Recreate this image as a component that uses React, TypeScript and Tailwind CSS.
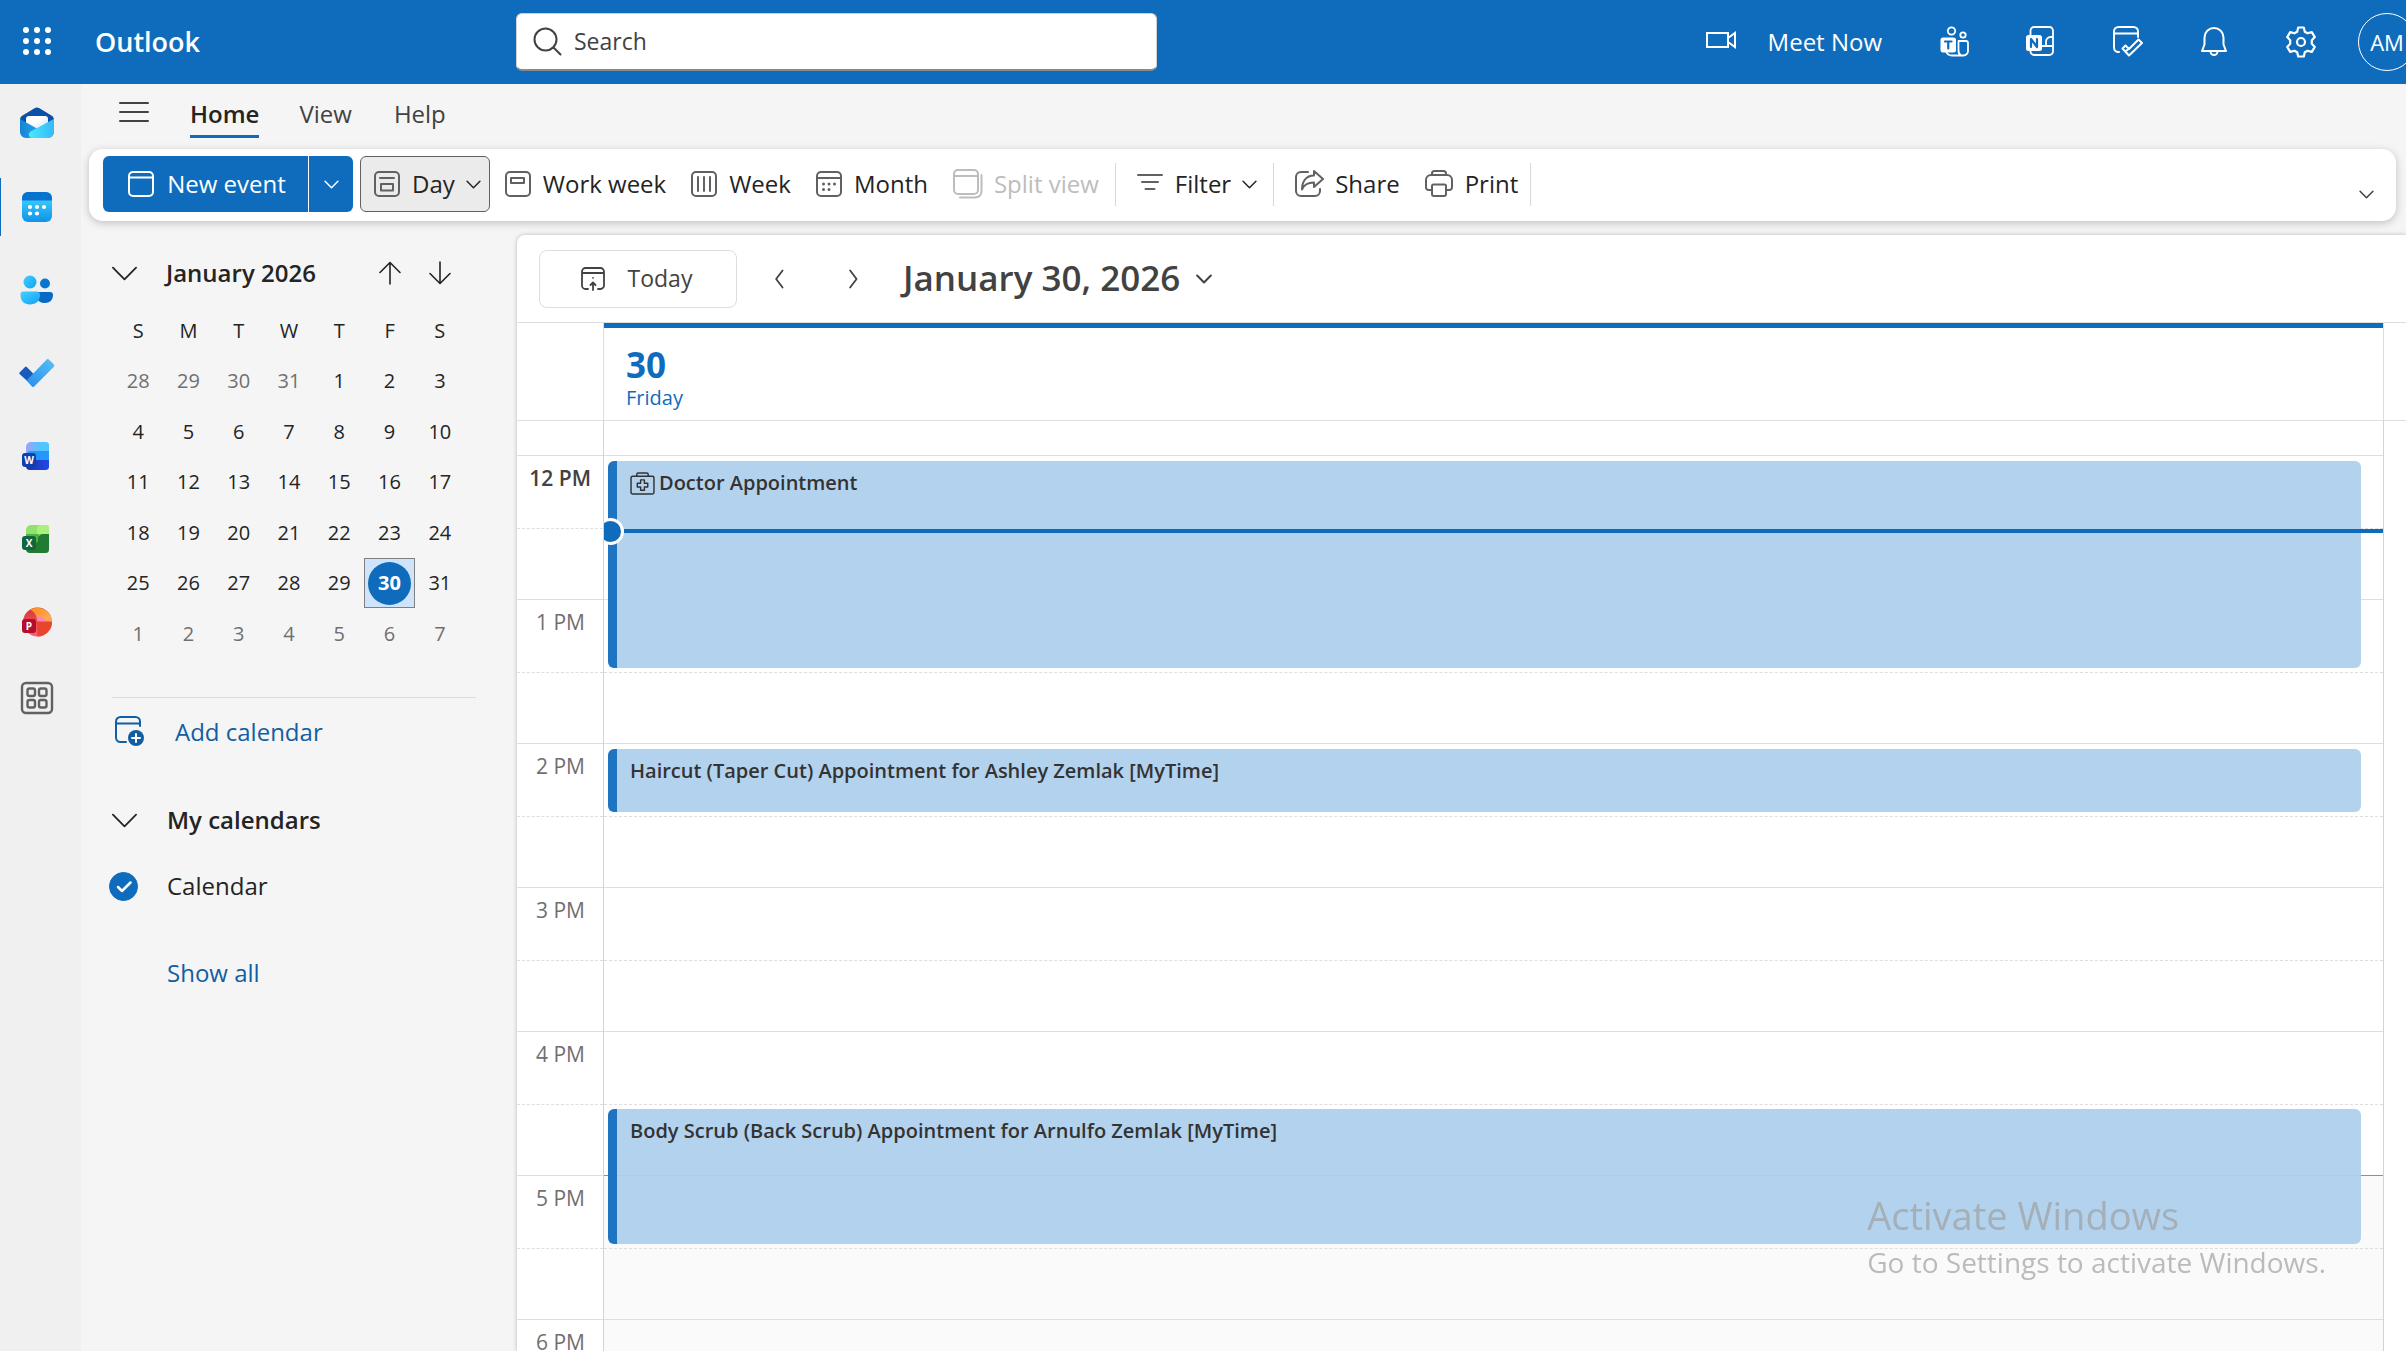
import type { ReactNode } from "react";
import clsx from "clsx";

const HOUR = 144;

const weekDays = ["S", "M", "T", "W", "T", "F", "S"];

const weeks = [
    [28, 29, 30, 31, 1, 2, 3],
    [4, 5, 6, 7, 8, 9, 10],
    [11, 12, 13, 14, 15, 16, 17],
    [18, 19, 20, 21, 22, 23, 24],
    [25, 26, 27, 28, 29, 30, 31],
    [1, 2, 3, 4, 5, 6, 7],
];

const hours = ["12 PM", "1 PM", "2 PM", "3 PM", "4 PM", "5 PM", "6 PM"];

const events = [
    { title: "Doctor Appointment", start: 0, length: 1.5, health: true },
    { title: "Haircut (Taper Cut) Appointment for Ashley Zemlak [MyTime]", start: 2, length: 0.5 },
    { title: "Body Scrub (Back Scrub) Appointment for Arnulfo Zemlak [MyTime]", start: 4.5, length: 1 },
];

type IconProps = { children: ReactNode; className?: string; size?: number; box?: number; width?: number };

/* Line icon, drawn on a 28 unit square */
function Icon({ children, className, size = 28, box = 28, width = 2 }: IconProps) {
    return (
        <svg
            width={size}
            height={size}
            viewBox={`0 0 ${box} ${box}`}
            fill="none"
            stroke="currentColor"
            strokeWidth={width}
            strokeLinecap="round"
            strokeLinejoin="round"
            className={clsx("shrink-0", className)}
            aria-hidden="true"
        >
            {children}
        </svg>
    );
}

function Chevron({ size = 14, dir = "down", width = 1.5 }: { size?: number; dir?: "down" | "left" | "right"; width?: number }) {
    const paths = {
        down: "M1 4l6 6 6-6",
        left: "M9.5 1L5 7l4.500 6",
        right: "M5 1l4.500 6L5 13",
    };
    return (
        <Icon size={size} box={14} width={(width * 14) / size}>
            <path d={paths[dir]} />
        </Icon>
    );
}

function MailLogo() {
    return (
        <svg width="34" height="34" viewBox="0 0 34 34" aria-hidden="true">
            <defs>
                <linearGradient id="mailBody" x1="0" y1="0" x2="1" y2="0">
                    <stop offset="0" stopColor="#1583d8" />
                    <stop offset="1" stopColor="#34c3f5" />
                </linearGradient>
                <linearGradient id="mailFlap" x1="0" y1="0" x2="1" y2="0">
                    <stop offset="0" stopColor="#4be8ff" />
                    <stop offset="1" stopColor="#35b9f6" />
                </linearGradient>
                <linearGradient id="mailPaper" x1="0" y1="0" x2="1" y2="1">
                    <stop offset=".4" stopColor="#fff" />
                    <stop offset="1" stopColor="#c4dcf2" />
                </linearGradient>
            </defs>
            <path d="M0 13C0 11 1 9.500 2.600 8.600L14.500 1.200a5 5 0 0 1 5 0L31.400 8.600C33 9.500 34 11 34 13v6H0z" fill="#0a50a8" />
            <path d="M6 12a3 3 0 0 1 3-3h16a3 3 0 0 1 3 3v9l-11 4-11-4z" fill="url(#mailPaper)" />
            <path d="M0 12l17 9.500L34 12v13a6 6 0 0 1-6 6H6a6 6 0 0 1-6-6z" fill="url(#mailBody)" />
            <path d="M34 12v13a6 6 0 0 1-6 6H12c-4 0-4.500-6 0-7.200z" fill="url(#mailFlap)" />
        </svg>
    );
}

function CalendarLogo() {
    return (
        <svg width="30" height="30" viewBox="0 0 30 30" aria-hidden="true">
            <defs>
                <linearGradient id="calBody" x1="0" y1="0" x2="0" y2="1">
                    <stop offset=".2" stopColor="#3dcbff" />
                    <stop offset="1" stopColor="#0f93e8" />
                </linearGradient>
            </defs>
            <rect width="30" height="30" rx="6" fill="url(#calBody)" />
            <path d="M0 8V6a6 6 0 0 1 6-6h18a6 6 0 0 1 6 6v2.500H0z" fill="#0674cf" />
            <g fill="#fff">
                <circle cx="8" cy="15" r="2.100" />
                <circle cx="15" cy="15" r="2.100" />
                <circle cx="22" cy="15" r="2.100" />
                <circle cx="8" cy="21.500" r="2.100" />
                <circle cx="15" cy="21.500" r="2.100" />
            </g>
        </svg>
    );
}

function PeopleLogo() {
    return (
        <svg width="34" height="30" viewBox="0 0 34 30" aria-hidden="true">
            <defs>
                <linearGradient id="peopleFront" x1="0" y1="0" x2="1" y2="1">
                    <stop offset="0" stopColor="#45d0ff" />
                    <stop offset="1" stopColor="#0fa2f5" />
                </linearGradient>
            </defs>
            <circle cx="25" cy="8.500" r="5" fill="#0b76d1" />
            <path d="M17 17h13a3 3 0 0 1 3 3c0 5-3.500 8-8 8-4 0-8-2-8-6z" fill="#0669c4" />
            <circle cx="10" cy="7" r="6.500" fill="url(#peopleFront)" />
            <path d="M3.500 16.500h13a3.500 3.500 0 0 1 3.500 3.500c0 6-4 9.500-10 9.500S.5 26 .5 20a3.200 3.200 0 0 1 3-3.500z" fill="url(#peopleFront)" />
        </svg>
    );
}

function TodoLogo() {
    return (
        <svg width="36" height="30" viewBox="0 0 36 30" aria-hidden="true">
            <defs>
                <linearGradient id="todoTick" x1="0" y1="1" x2="1" y2="0">
                    <stop offset="0" stopColor="#2a8dea" />
                    <stop offset="1" stopColor="#57c0f8" />
                </linearGradient>
            </defs>
            <path d="M.8 14.200l5-5a1.500 1.500 0 0 1 2.200 0l7 7-6.500 7L.8 16.200a1.400 1.400 0 0 1 0-2z" fill="#195abd" />
            <path d="M7.500 22.500L27.700 1.600a1.500 1.500 0 0 1 2.200 0l5 5a1.500 1.500 0 0 1 0 2.100L15.200 28.500a1.500 1.500 0 0 1-2.200 0z" fill="url(#todoTick)" />
        </svg>
    );
}

/* Letter tile shared by the office apps */
function LetterTile({ letter, color, y = 11 }: { letter: string; color: string; y?: number }) {
    return (
        <>
            <rect x="0" y={y} width="14" height="14" rx="3" fill={color} />
            <text x="7" y={y + 10.500} textAnchor="middle" fill="#fff" fontSize="10" fontWeight="700" fontFamily="Open Sans, sans-serif">
                {letter}
            </text>
        </>
    );
}

function WordLogo() {
    return (
        <svg width="30" height="28" viewBox="0 0 30 28" aria-hidden="true">
            <defs>
                <linearGradient id="wordTop" x1="0" y1="0" x2="1" y2="0">
                    <stop offset="0" stopColor="#a3a2fb" />
                    <stop offset=".6" stopColor="#4fc6fd" />
                </linearGradient>
                <linearGradient id="wordLow" x1="0" y1="0" x2="1" y2="0">
                    <stop offset="0" stopColor="#2330a8" />
                    <stop offset="1" stopColor="#1c49e8" />
                </linearGradient>
            </defs>
            <path d="M4 5a5 5 0 0 1 5-5h15a3 3 0 0 1 3 3v8H4z" fill="url(#wordTop)" />
            <path d="M4 14a5 5 0 0 1 5-5h18v11H4z" fill="#2497f8" />
            <path d="M4 23a5 5 0 0 1 5-5h18v6.500a3.500 3.500 0 0 1-3.500 3.500H8a4 4 0 0 1-4-4z" fill="url(#wordLow)" />
            <LetterTile letter="W" color="#0f3fae" />
        </svg>
    );
}

function ExcelLogo() {
    return (
        <svg width="30" height="28" viewBox="0 0 30 28" aria-hidden="true">
            <path d="M4 5a5 5 0 0 1 5-5h15a3 3 0 0 1 3 3v8H4z" fill="#8fe36b" />
            <path d="M15 9V3.500A3.500 3.500 0 0 1 18.500 0H24a3 3 0 0 1 3 3v6z" fill="#a9f07f" />
            <path d="M4 9h13v10H4z" fill="#4db53f" />
            <path d="M16 14a5 5 0 0 1 5-5h6v15.500a3.500 3.500 0 0 1-3.500 3.500H8a4 4 0 0 1-4-4v-6h9a3 3 0 0 0 3-3z" fill="#237a32" />
            <LetterTile letter="X" color="#0f6640" />
        </svg>
    );
}

function PowerPointLogo() {
    return (
        <svg width="30" height="30" viewBox="0 0 30 30" aria-hidden="true">
            <defs>
                <linearGradient id="pptLeft" x1="0" y1="0" x2="0" y2="1">
                    <stop offset="0" stopColor="#d8362f" />
                    <stop offset="1" stopColor="#f9607b" />
                </linearGradient>
                <linearGradient id="pptRight" x1="0" y1="0" x2="1" y2="1">
                    <stop offset="0" stopColor="#ff8a1f" />
                    <stop offset="1" stopColor="#fdb465" />
                </linearGradient>
            </defs>
            <circle cx="15.500" cy="15" r="14.500" fill="url(#pptLeft)" />
            <path d="M8 2.500C17-2 30 3 30 15l-3 2-12-3c0-5-2-9-7-11.500z" fill="url(#pptRight)" />
            <path d="M15 8l3 1 8 6-11-.5z" fill="#fb84b4" />
            <path d="M15 14.500h15c0 8-6 15-14.500 15z" fill="#e8452e" />
            <LetterTile letter="P" color="#b50e2a" y={12} />
        </svg>
    );
}

function AppsIcon() {
    return (
        <Icon size={34} box={34} width={2.4}>
            <rect x="2" y="2" width="30" height="30" rx="4" />
            <rect x="7.500" y="7.500" width="7.500" height="7.500" rx="2" />
            <rect x="19" y="7.500" width="7.500" height="7.500" rx="2" />
            <rect x="7.500" y="19" width="7.500" height="7.500" rx="2" />
            <rect x="19" y="19" width="7.500" height="7.500" rx="2" />
        </Icon>
    );
}

const railApps = [
    { name: "Mail", logo: <MailLogo /> },
    { name: "Calendar", logo: <CalendarLogo />, active: true },
    { name: "People", logo: <PeopleLogo /> },
    { name: "To Do", logo: <TodoLogo /> },
    { name: "Word", logo: <WordLogo /> },
    { name: "Excel", logo: <ExcelLogo /> },
    { name: "PowerPoint", logo: <PowerPointLogo /> },
];

function TopBar() {
    return (
        <header className="flex h-21 shrink-0 items-center overflow-hidden bg-[#0f6cbd] text-white">
            <button aria-label="App launcher" className="flex w-[74px] shrink-0 justify-center">
                <svg width="30" height="30" viewBox="0 0 30 30" fill="currentColor" aria-hidden="true">
                    {[4, 15, 26].map((y) => [4, 15, 26].map((x) => <circle key={`${x}-${y}`} cx={x} cy={y - 1} r="3" />))}
                </svg>
            </button>
            <span className="w-[442px] shrink-0 pl-[21px] text-[27px] font-semibold">Outlook</span>
            <label className="flex h-[58px] w-[641px] items-center gap-3 rounded-md border border-b-2 border-[#d1d1d1] border-b-[#8a8a8a] bg-white px-4 text-[#424242]">
                <Icon size={29} box={29}>
                    <circle cx="12.500" cy="12.500" r="11" />
                    <path d="M20.500 20.500l7 7" />
                </Icon>
                <input type="text" placeholder="Search" aria-label="Search" className="min-w-0 flex-1 bg-transparent text-[23px] outline-none placeholder:text-[#424242]" />
            </label>
            <div className="ml-auto flex shrink-0 items-center">
                <button className="mr-[56px] flex items-center gap-[31px] text-[24px]">
                    <Icon size={32} box={32} width={2} className="-mt-1">
                        <path d="M2 9h21v14H2zM23 14l7-5v14l-7-5" strokeLinejoin="miter" />
                    </Icon>
                    Meet Now
                </button>
                <div className="mr-[40px] flex items-center gap-[54px]">
                    <button aria-label="Teams">
                        <Icon size={32} box={32} width={1.8}>
                            <circle cx="13.500" cy="5" r="3.700" />
                            <circle cx="25" cy="9" r="2.700" />
                            <path d="M20.500 15h7.500a2 2 0 0 1 2 2v8a4.500 4.500 0 0 1-4.500 4.500H14a6.500 6.500 0 0 1-6-4M20.500 15v9.500c0 2.500 1 4.300 3 5" />
                            <rect x="2.500" y="11.500" width="15.500" height="15" rx="2.500" fill="#fff" stroke="none" />
                            <path d="M7 15.500h6.500M10.250 15.500v7" stroke="#0f6cbd" strokeWidth="2.200" />
                        </Icon>
                    </button>
                    <button aria-label="OneNote">
                        <Icon size={32} box={32} width={1.8}>
                            <path d="M6.500 10V4.500A3.500 3.500 0 0 1 10 1h15.500A3.500 3.500 0 0 1 29 4.500v21a3.500 3.500 0 0 1-3.500 3.500H10a3.500 3.500 0 0 1-3.500-3.500M29 11h-2.500a4.500 4.500 0 0 0-4.500 4.500v4.500M18 20h11" />
                            <rect x="2" y="9" width="16" height="16" rx="2.500" fill="#fff" stroke="none" />
                            <path d="M7 21v-8l6 8v-8" stroke="#0f6cbd" strokeWidth="2.200" />
                        </Icon>
                    </button>
                    <button aria-label="My Day">
                        <Icon size={34} box={34}>
                            <path d="M9 27H8.500A4.500 4.500 0 0 1 4 22.500v-16A4.500 4.500 0 0 1 8.500 2h15A4.500 4.500 0 0 1 28 6.500V12M4 8.500h24" />
                            <path d="M12.500 23.500l3-3 3.500 3.500 9.500-9.500 3.500 3.500-13 12.500zM15.500 26.500l3.500-3" />
                        </Icon>
                    </button>
                    <button aria-label="Notifications">
                        <Icon size={32} box={32}>
                            <path d="M16 2a9.500 9.500 0 0 0-9.500 9.500v7L4 25h24l-2.500-6.500v-7A9.500 9.500 0 0 0 16 2zM12.500 25.500a3.500 3.500 0 0 0 7 0" />
                        </Icon>
                    </button>
                    <button aria-label="Settings">
                        <Icon size={34} box={34} width={2.2}>
                            <circle cx="17" cy="17" r="4" />
                            <path d="M14.200 2.500h5.600l1 4.200 2.800 1.600 4.200-1.200 3 5-3 3.100v3.600l3 3.100-3 5-4.200-1.200-2.800 1.600-1 4.200h-5.600l-1-4.200-2.800-1.600-4.200 1.200-3-5 3-3.100v-3.600l-3-3.100 3-5 4.200 1.200 2.800-1.600z" />
                        </Icon>
                    </button>
                </div>
                <button aria-label="Account" className="-mr-[10px] flex size-[58px] items-center justify-center rounded-full border border-white text-[22px]">
                    AM
                </button>
            </div>
        </header>
    );
}

function Rail() {
    return (
        <nav className="flex w-[81px] shrink-0 flex-col gap-[25px] bg-[#f0f0f0] pt-[11px]">
            {railApps.map((app) => (
                <button
                    key={app.name}
                    aria-label={app.name}
                    className={clsx("flex h-[58px] w-18 items-center justify-center border-l", app.active ? "border-[#0f6cbd]" : "border-transparent")}
                >
                    {app.logo}
                </button>
            ))}
            <button aria-label="More apps" className="flex h-11 w-[74px] items-center justify-center text-[#616161]">
                <AppsIcon />
            </button>
        </nav>
    );
}

function RibbonButton({ icon, label, menu, disabled, active }: { icon: ReactNode; label: string; menu?: boolean; disabled?: boolean; active?: boolean }) {
    return (
        <button
            disabled={disabled}
            className={clsx(
                "flex h-14 items-center gap-[11px] rounded-md border",
                active ? "mr-0.5 border-[#616161] bg-[#ebebeb] pr-2 pl-3" : "border-transparent px-[11px]",
                disabled ? "text-[#bdbdbd]" : "text-[#242424]",
            )}
        >
            <span className={disabled ? "text-[#bdbdbd]" : "text-[#616161]"}>{icon}</span>
            {label}
            {menu && <Chevron size={15} />}
        </button>
    );
}

function RibbonDivider() {
    return <span className="h-[43px] w-px bg-[#d8d8d8]" />;
}

function Ribbon() {
    return (
        <div className="mr-[10px] ml-2 flex h-[72px] shrink-0 items-center rounded-[14px] bg-white px-[14px] pb-0.5 text-[24px] shadow-[0_2px_8px_rgba(0,0,0,0.22)]">
            <div className="mr-[7px] flex h-14 overflow-hidden rounded-md bg-[#0f6cbd] text-white">
                <button className="flex w-[206px] items-center justify-center gap-3 border-r border-white pl-0.5">
                    <Icon>
                        <rect x="2" y="2" width="24" height="24" rx="4" />
                        <path d="M2 7.500h24" />
                    </Icon>
                    New event
                </button>
                <button aria-label="More new items" className="flex w-11 items-center justify-center">
                    <Chevron size={15} />
                </button>
            </div>
            <RibbonButton
                active
                menu
                label="Day"
                icon={
                    <Icon>
                        <rect x="2" y="2" width="24" height="24" rx="4" />
                        <path d="M7 8h14M8 14h12v6.500H8z" />
                    </Icon>
                }
            />
            <RibbonButton
                label="Work week"
                icon={
                    <Icon>
                        <rect x="2" y="2" width="24" height="24" rx="4" />
                        <path d="M7 8h13v5H7z" />
                    </Icon>
                }
            />
            <RibbonButton
                label="Week"
                icon={
                    <Icon>
                        <rect x="2" y="2" width="24" height="24" rx="4" />
                        <path d="M8 7v14M14 7v14M20 7v14" />
                    </Icon>
                }
            />
            <RibbonButton
                label="Month"
                icon={
                    <Icon>
                        <rect x="2" y="2" width="24" height="24" rx="4" />
                        <path d="M2 8h24" />
                        <path d="M8.500 14h.01M14 14h.01M19.500 14h.01M8.500 19.500h.01M14 19.500h.01" strokeWidth="3" />
                    </Icon>
                }
            />
            <RibbonButton
                disabled
                label="Split view"
                icon={
                    <Icon size={31} box={31}>
                        <rect x="2" y="1" width="24" height="24" rx="4" />
                        <path d="M2 7h24M29.500 6v16.500a6 6 0 0 1-6 6H8" />
                    </Icon>
                }
            />
            <span className="w-1" />
            <RibbonDivider />
            <span className="w-2" />
            <RibbonButton
                menu
                label="Filter"
                icon={
                    <Icon>
                        <path d="M2 5h24M6 12h16M9.500 19h9" />
                    </Icon>
                }
            />
            <span className="w-1" />
            <RibbonDivider />
            <span className="w-2" />
            <RibbonButton
                label="Share"
                icon={
                    <Icon size={30} box={30}>
                        <path d="M14 3H7a5 5 0 0 0-5 5v14a5 5 0 0 0 5 5h14a5 5 0 0 0 5-5v-2" />
                        <path d="M20 2l9 8-9 8v-4.500c-6 0-10 2-12 7 0-8 4-14 12-14z" />
                    </Icon>
                }
            />
            <RibbonButton
                label="Print"
                icon={
                    <Icon size={30} box={30}>
                        <path d="M8 21H4.500A2.500 2.500 0 0 1 2 18.500V11a5 5 0 0 1 5-5h16a5 5 0 0 1 5 5v7.500a2.500 2.500 0 0 1-2.500 2.500H22" />
                        <path d="M8 6V4.500A2.500 2.500 0 0 1 10.500 2h9A2.500 2.500 0 0 1 22 4.500V6M9.500 15.500h11A1.500 1.500 0 0 1 22 17v8a2 2 0 0 1-2 2H10a2 2 0 0 1-2-2v-8a1.500 1.500 0 0 1 1.500-1.500z" />
                    </Icon>
                }
            />
            <RibbonDivider />
            <button aria-label="Ribbon options" className="mt-5 mr-2 ml-auto text-[#424242]">
                <Chevron size={15} />
            </button>
        </div>
    );
}

function MiniCalendar() {
    return (
        <table className="mt-2 ml-8 h-[353px] w-[352px] table-fixed border-collapse text-center text-[20px] text-[#242424]">
            <thead>
                <tr>
                    {weekDays.map((day, i) => (
                        <th key={i} className="h-[50px] p-0 font-normal">
                            {day}
                        </th>
                    ))}
                </tr>
            </thead>
            <tbody>
                {weeks.map((week, row) => (
                    <tr key={row}>
                        {week.map((day, i) => {
                            const outside = (row === 0 && day > 7) || row === 5;
                            const today = row === 4 && day === 30;
                            return (
                                <td key={i} className={clsx("h-[50px] p-0", outside && "text-[#707070]")}>
                                    {today ? (
                                        <span className="flex h-[50px] items-center justify-center border border-[#808080] bg-[#cfe4fa]">
                                            <span className="flex size-[43px] items-center justify-center rounded-full bg-[#0f6cbd] font-bold text-white">{day}</span>
                                        </span>
                                    ) : (
                                        day
                                    )}
                                </td>
                            );
                        })}
                    </tr>
                ))}
            </tbody>
        </table>
    );
}

function Sidebar() {
    return (
        <aside className="w-[436px] shrink-0 text-[24px] text-[#242424]">
            <div className="mt-[27px] flex h-[50px] items-center pl-[30px]">
                <button aria-label="Collapse month" className="flex w-[55px]">
                    <Chevron size={27} width={1.8} />
                </button>
                <span className="flex-1 font-semibold">January 2026</span>
                <button aria-label="Previous month" className="mr-[22px]">
                    <Icon width={1.6}>
                        <path d="M14 25V4M4 13.500L14 3.500l10 10" />
                    </Icon>
                </button>
                <button aria-label="Next month" className="mr-[63px]">
                    <Icon width={1.6}>
                        <path d="M14 3v21M4 14.500l10 10 10-10" />
                    </Icon>
                </button>
            </div>
            <MiniCalendar />
            <hr className="mt-[38px] mr-[41px] ml-[31px] border-[#dcdcdc]" />
            <button className="mt-3 ml-8 flex h-11 items-center gap-7 text-[#115ea3]">
                <Icon size={34} box={34}>
                    <path d="M13 27H7.500A4.500 4.500 0 0 1 3 22.500v-16A4.500 4.500 0 0 1 7.500 2h15A4.500 4.500 0 0 1 27 6.500V11M3 8.500h24" />
                    <circle cx="23" cy="23" r="8" fill="currentColor" stroke="none" />
                    <path d="M23 19v8M19 23h8" stroke="#fff" />
                </Icon>
                Add calendar
            </button>
            <button className="mt-[44px] ml-[30px] flex h-11 items-center font-semibold">
                <span className="flex w-14">
                    <Chevron size={27} width={1.8} />
                </span>
                My calendars
            </button>
            <label className="mt-[22px] ml-7 flex h-11 items-center">
                <span className="grid w-[58px] place-items-start">
                    <input type="checkbox" defaultChecked className="col-start-1 row-start-1 size-[29px] appearance-none rounded-full border border-[#0f6cbd] checked:bg-[#0f6cbd]" />
                    <Icon size={29} box={29} width={2.5} className="pointer-events-none col-start-1 row-start-1 text-white">
                        <path d="M9 15l4 4 8.500-8.500" />
                    </Icon>
                </span>
                Calendar
            </label>
            <a href="#" className="mt-[43px] ml-[86px] flex h-11 w-fit items-center text-[#115ea3]">
                Show all
            </a>
        </aside>
    );
}

function DayHeader() {
    return (
        <div className="flex h-[99px] shrink-0 border-y border-[#dedede]">
            <div className="w-[86px] shrink-0" />
            <div className="mr-[22px] flex-1 border-x border-[#dedede]">
                <div className="h-[5px] bg-[#0f6cbd]" />
                <div className="pt-4 pl-[22px] text-[#0f6cbd]">
                    <div className="text-[35px] leading-[42px] font-bold">30</div>
                    <div className="text-[20px] leading-6">Friday</div>
                </div>
            </div>
        </div>
    );
}

function TimeGrid() {
    return (
        <div className="flex min-h-0 flex-1 overflow-hidden">
            <div className="w-[86px] shrink-0 pt-[34px]">
                {hours.map((hour, i) => (
                    <div key={hour} className="border-t border-[#dedede]" style={{ height: HOUR }}>
                        <div className={clsx("h-[73px] border-b border-dashed border-[#dedede] pt-2 text-right text-[21px] leading-7", i === 0 ? "pr-3 font-semibold text-[#424242]" : "pr-[18px] text-[#707070]")}>
                            {hour}
                        </div>
                    </div>
                ))}
            </div>
            <div className="mr-[22px] flex-1 overflow-hidden border-x border-[#d4d4d4] pt-[34px]">
                <div className="relative">
                    {hours.map((hour, i) => (
                        <div
                            key={hour}
                            className={clsx("border-t", i === 5 ? "border-[#8f8f8f]" : "border-[#dedede]", i > 4 && "bg-[#fafafa]")}
                            style={{ height: HOUR }}
                        >
                            <div className="h-[73px] border-b border-dashed border-[#dedede]" />
                        </div>
                    ))}
                    {events.map((event) => (
                        <button
                            key={event.title}
                            className="absolute right-[22px] left-1 flex items-start gap-1 overflow-hidden rounded-md border-l-9 border-[#1f74c1] bg-[#afd0ed]/95 pt-2 pl-[13px] text-left text-[20px] leading-7 font-semibold text-[#333]"
                            style={{ top: event.start * HOUR + 6, height: event.length * HOUR - 9 }}
                        >
                            {event.health && (
                                <Icon size={25} box={24} width={1.4} className="mt-0.5">
                                    <path d="M2.500 5h19A1.500 1.500 0 0 1 23 6.500v14a1.500 1.500 0 0 1-1.500 1.500h-19A1.500 1.500 0 0 1 1 20.500v-14A1.500 1.500 0 0 1 2.500 5zM6.500 5V3.500A1.500 1.500 0 0 1 8 2h8a1.500 1.500 0 0 1 1.500 1.500V5" />
                                    <path d="M10.200 8.500h3.600v3.200H17v3.600h-3.200v3.200h-3.600v-3.200H7v-3.600h3.200z" />
                                </Icon>
                            )}
                            {event.title}
                        </button>
                    ))}
                    <div className="absolute inset-x-0 top-[62px] flex h-7 items-center">
                        <span className="-ml-[7px] size-[27px] shrink-0 rounded-full border-3 border-white bg-[#0f6cbd]" />
                        <span className="h-1 flex-1 bg-[#0f6cbd]" />
                    </div>
                </div>
            </div>
        </div>
    );
}

function CalendarPanel() {
    return (
        <main className="mt-[14px] flex min-w-0 flex-1 flex-col overflow-hidden rounded-tl-lg bg-white shadow-[0_0_4px_rgba(0,0,0,0.25)]">
            <div className="flex h-[87px] shrink-0 items-center pl-[22px] text-[#424242]">
                <button className="flex h-[58px] w-[198px] items-center justify-center gap-[22px] rounded-lg border border-[#dedede] pr-1 text-[23px]">
                    <Icon size={26} box={26} width={1.8}>
                        <path d="M8 23H5.500A3.500 3.500 0 0 1 2 19.500v-14A3.500 3.500 0 0 1 5.500 2h15A3.500 3.500 0 0 1 24 5.500v14a3.500 3.500 0 0 1-3.500 3.500H18M2 7h22M13 24v-7M10.500 19l2.500-2.500 2.500 2.500M13 11.800h.01" />
                    </Icon>
                    Today
                </button>
                <button aria-label="Previous day" className="ml-8">
                    <Chevron size={20} dir="left" width={1.8} />
                </button>
                <button aria-label="Next day" className="ml-[54px]">
                    <Chevron size={20} dir="right" width={1.8} />
                </button>
                <button className="ml-10 flex items-center gap-4 text-[35px] font-semibold">
                    January 30, 2026
                    <Chevron size={16} width={2} />
                </button>
            </div>
            <DayHeader />
            <TimeGrid />
        </main>
    );
}

export default function App() {
    return (
        <div className="flex h-screen flex-col overflow-hidden bg-[#f5f5f5] font-['Open_Sans',sans-serif]">
            <TopBar />
            <div className="flex min-h-0 flex-1">
                <Rail />
                <div className="flex min-w-0 flex-1 flex-col">
                    <div className="flex h-[65px] shrink-0 items-start pl-[38px] text-[24px] text-[#424242]">
                        <button aria-label="Toggle navigation" className="mt-[13px] mr-10">
                            <Icon size={31} box={31}>
                                <path d="M1 6h28M1 15h28M1 24h28" />
                            </Icon>
                        </button>
                        <button className="mr-10 h-[54px] border-b-3 border-[#0f6cbd] pt-2 font-semibold text-[#242424]">Home</button>
                        <button className="mr-[42px] h-[54px] border-b-3 border-transparent pt-2">View</button>
                        <button className="h-[54px] border-b-3 border-transparent pt-2">Help</button>
                    </div>
                    <Ribbon />
                    <div className="flex min-h-0 flex-1">
                        <Sidebar />
                        <CalendarPanel />
                    </div>
                </div>
            </div>
            {/* system notice floating over the page */}
            <div className="pointer-events-none fixed right-20 bottom-[69px] text-[#a0a0a0]/70">
                <div className="text-[38px] leading-[54px]">Activate Windows</div>
                <div className="text-[28px] leading-10">Go to Settings to activate Windows.</div>
            </div>
        </div>
    );
}
